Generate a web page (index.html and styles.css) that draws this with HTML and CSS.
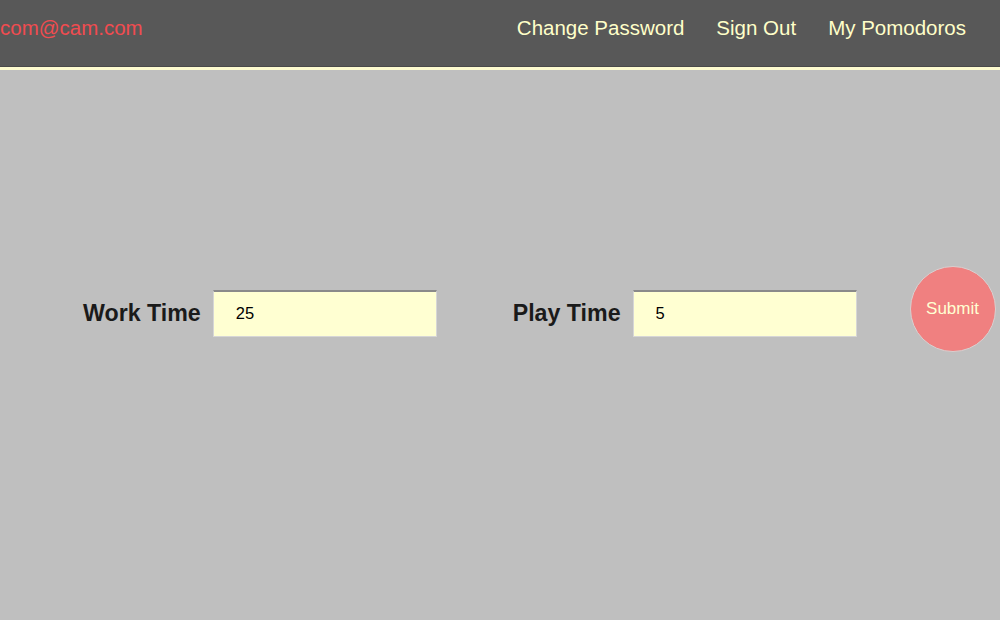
FILE: index.html
```html
<!DOCTYPE html>
<html>
<head>
<meta charset="utf-8">
<link rel="stylesheet" href="styles.css">
</head>
<body>
<header class="topbar">
  <div class="user-email">com@cam.com</div>
  <nav class="nav">
    <a class="nav-link" href="#">Change Password</a>
    <a class="nav-link" href="#">Sign Out</a>
    <a class="nav-link" href="#">My Pomodoros</a>
  </nav>
</header>
<main class="main">
  <form class="timer-form">
    <div class="field">
      <label class="field-label">Work Time</label>
      <input class="field-input" type="text" value="25">
    </div>
    <div class="field field-play">
      <label class="field-label">Play Time</label>
      <input class="field-input" type="text" value="5">
    </div>
    <button class="submit-btn" type="button">Submit</button>
  </form>
</main>
</body>
</html>
```
FILE: styles.css
```css
html, body {
  margin: 0;
  padding: 0;
}
body {
  background: #bfbfbf;
  font-family: "Liberation Sans", Arial, Helvetica, sans-serif;
  height: 620px;
  overflow: hidden;
}
.topbar {
  display: flex;
  justify-content: space-between;
  align-items: flex-start;
  background: #585858;
  border-bottom: 1px solid #4a4a4a;
  box-shadow: 0 3px 0 #fdfbcf;
  margin-bottom: 3px;
  box-sizing: border-box;
  height: 67px;
  padding-top: 16px;
}
.user-email {
  color: #f04c50;
  font-size: 20.5px;
  line-height: 24px;
}
.nav {
  display: flex;
  gap: 32px;
  padding-right: 34px;
}
.nav-link {
  color: #ffffc9;
  text-decoration: none;
  font-size: 20.5px;
  line-height: 24px;
}
.main {
  padding-top: 196px;
}
.timer-form {
  display: flex;
  align-items: center;
  padding-left: 83px;
}
.field {
  display: flex;
  align-items: center;
  gap: 12px;
}
.field-play {
  margin-left: 76px;
}
.field-label {
  font-weight: bold;
  font-size: 23.2px;
  color: #1a1a1a;
}
.field-input {
  width: 224px;
  height: 47px;
  box-sizing: border-box;
  background: #ffffd2;
  border: 1px solid #d6d6d6;
  border-top: 2px solid #8a8a8a;
  padding: 0 0 0 22px;
  font-family: "Liberation Sans", Arial, sans-serif;
  font-size: 16.5px;
  color: #000;
  outline: none;
}
.submit-btn {
  margin-left: 53px;
  margin-bottom: 8px;
  width: 86px;
  height: 86px;
  border-radius: 50%;
  background: #f08080;
  border: 1px solid #d9d0d0;
  color: #ffffd2;
  font-family: "Liberation Sans", Arial, sans-serif;
  font-size: 17px;
  padding: 0;
}
```
